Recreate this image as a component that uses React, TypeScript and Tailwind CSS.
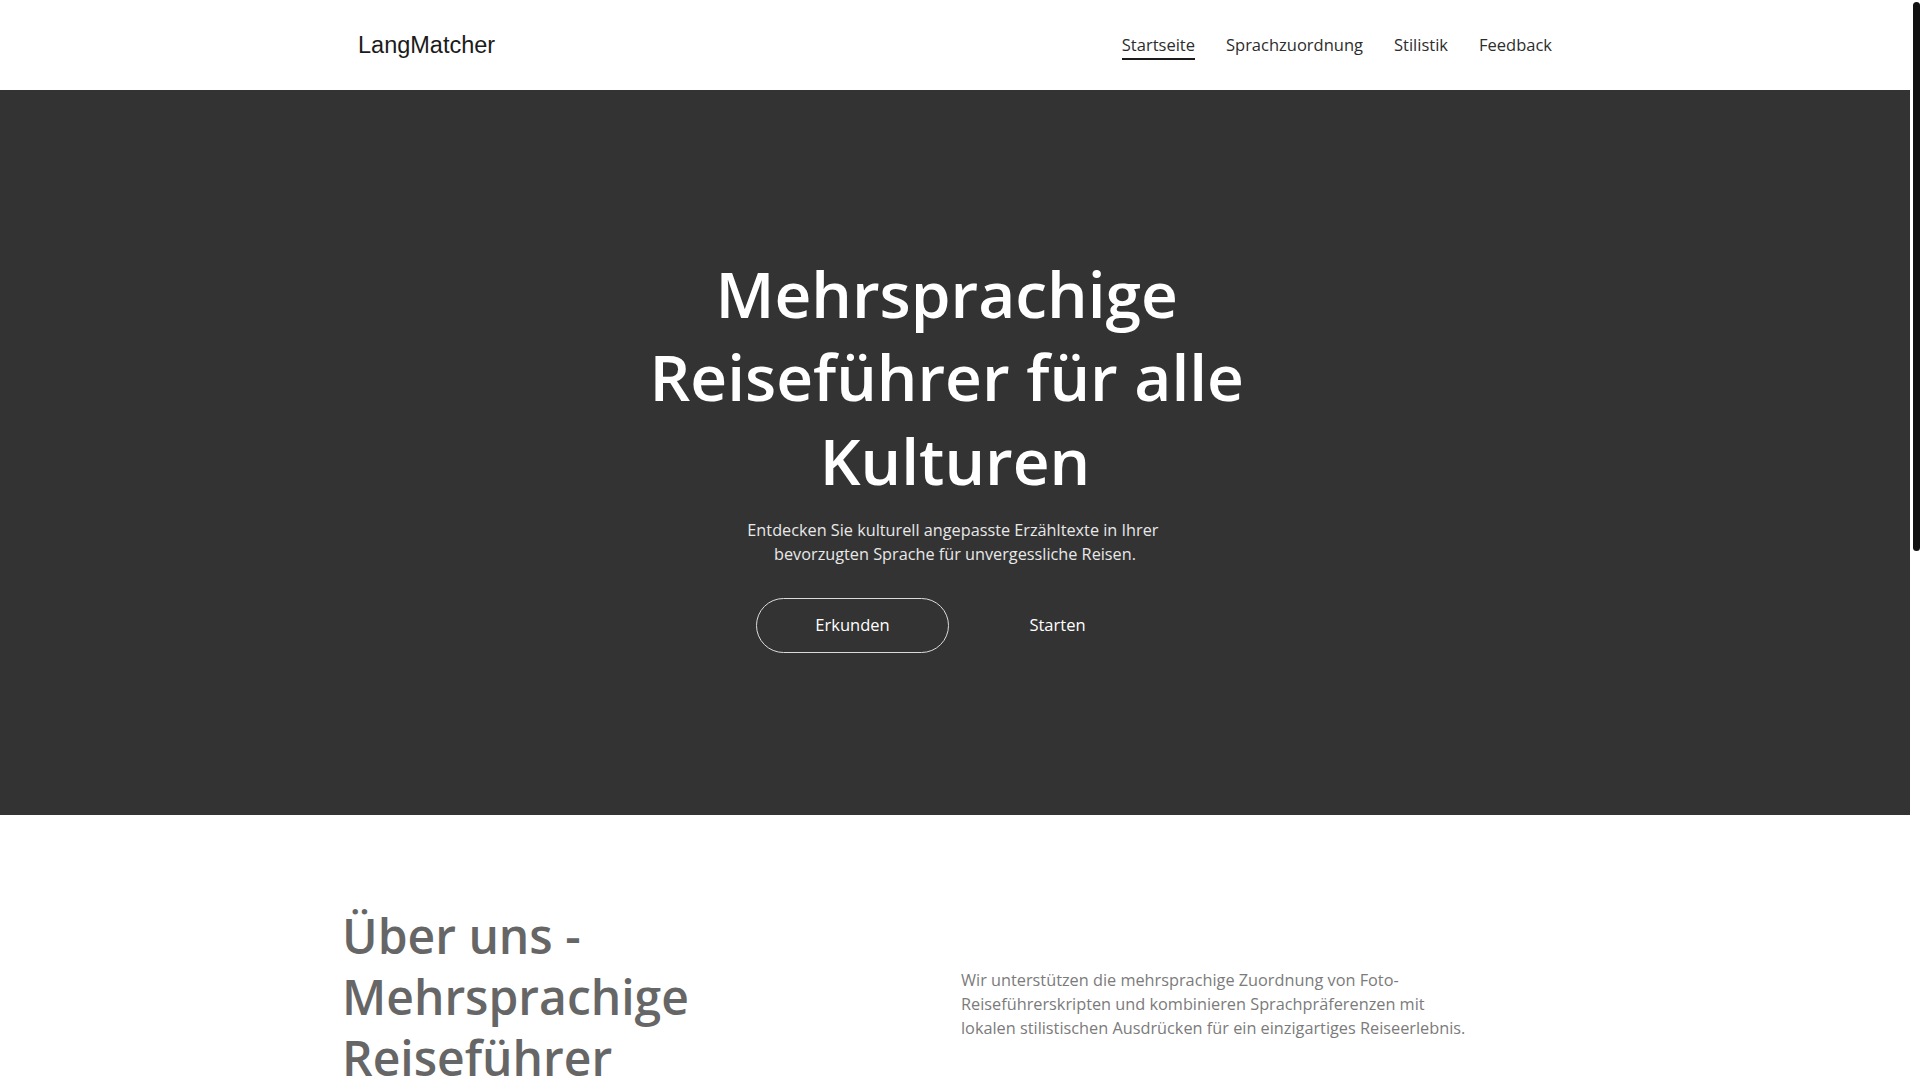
import React from "react";

const navLinks = [
  { label: "Startseite", active: true },
  { label: "Sprachzuordnung", active: false },
  { label: "Stilistik", active: false },
  { label: "Feedback", active: false },
];

const features = [
  {
    title: "Sprachzuordnung",
    text: "Ordnen Sie Foto-Reiseführerskripte automatisch Ihrer bevorzugten Sprache zu.",
  },
  {
    title: "Stilistik",
    text: "Lokale Ausdrücke und Redewendungen machen jeden Text authentisch.",
  },
  {
    title: "Feedback",
    text: "Teilen Sie uns mit, wie wir Ihr Reiseerlebnis verbessern können.",
  },
];

function Header() {
  return (
    <header className="h-[90px] bg-white">
      <div className="w-[1194px] mx-auto h-full flex items-center justify-between">
        <span className="font-['Liberation_Sans',Arial,sans-serif] text-[23.5px] text-[#1b1b1b] pt-[1px]">
          LangMatcher
        </span>
        <nav className="flex items-center gap-[31px]">
          {navLinks.map((l) => (
            <a
              key={l.label}
              href="#"
              className={`pt-[3px] text-[16.5px] leading-6 text-[#2d2d2d] ${
                l.active ? "border-b-2 border-[#1b1b1b] pb-[1px]" : "pb-[3px]"
              }`}
            >
              {l.label}
            </a>
          ))}
        </nav>
      </div>
    </header>
  );
}

function Hero() {
  return (
    <section className="h-[725px] bg-[#333333] flex flex-col items-center justify-center text-center">
      <h1 className="max-w-[760px] whitespace-break-spaces text-[64px] leading-[1.3] font-semibold text-white">
        Mehrsprachige Reiseführer für alle Kulturen
      </h1>
      <p className="mt-4 max-w-[460px] whitespace-break-spaces text-[16.25px] leading-6 text-[#e8e8e8]">
        Entdecken Sie kulturell angepasste Erzähltexte in Ihrer bevorzugten Sprache für unvergessliche Reisen.
      </p>
      <div className="mt-8 flex gap-3">
        <button className="w-[193px] h-[55px] rounded-full border border-[#dcdcdc] text-[16.5px] text-white">
          Erkunden
        </button>
        <button className="w-[193px] h-[55px] rounded-full text-[16.5px] text-white">
          Starten
        </button>
      </div>
    </section>
  );
}

function About() {
  return (
    <section className="pt-[91px] pb-24 bg-white">
      <div className="w-[1232px] mx-auto flex">
        <div className="w-[622px] shrink-0 pl-[3px]">
          <h2 className="max-w-[420px] text-[48px] leading-[1.27] font-semibold text-[#666666]">
            Über uns - Mehrsprachige Reiseführer
          </h2>
        </div>
        <p className="mt-[62px] w-[512px] text-[16.3px] leading-6 text-[#7b7b7b]">
          Wir unterstützen die mehrsprachige Zuordnung von Foto-Reiseführerskripten und kombinieren
          Sprachpräferenzen mit lokalen stilistischen Ausdrücken für ein einzigartiges Reiseerlebnis.
        </p>
      </div>
    </section>
  );
}

function Features() {
  return (
    <section className="min-h-[760px] bg-[#f5f5f5] flex items-center">
      <div className="w-[1232px] mx-auto grid grid-cols-3 gap-8">
        {features.map((f) => (
          <div key={f.title} className="bg-white rounded-lg p-10">
            <h3 className="text-[24px] font-semibold text-[#333333]">{f.title}</h3>
            <p className="mt-3 text-[16px] leading-6 text-[#7b7b7b]">{f.text}</p>
          </div>
        ))}
      </div>
    </section>
  );
}

function Footer() {
  return (
    <footer className="h-[180px] bg-[#333333] flex items-center justify-center">
      <span className="text-[14px] text-[#bdbdbd]">© 2024 LangMatcher</span>
    </footer>
  );
}

export default function App() {
  return (
    <div className="h-screen flex overflow-hidden bg-white font-['Open_Sans','Noto_Sans',sans-serif]">
      <div className="flex-1 min-w-0 overflow-hidden">
        <Header />
        <Hero />
        <About />
        <Features />
        <Footer />
      </div>
      {/* page scrollbar */}
      <div className="w-[10px] shrink-0 bg-white pt-[2px] pl-[3px]">
        <div className="w-[7px] h-[549px] rounded-full bg-[#111111]" />
      </div>
    </div>
  );
}
